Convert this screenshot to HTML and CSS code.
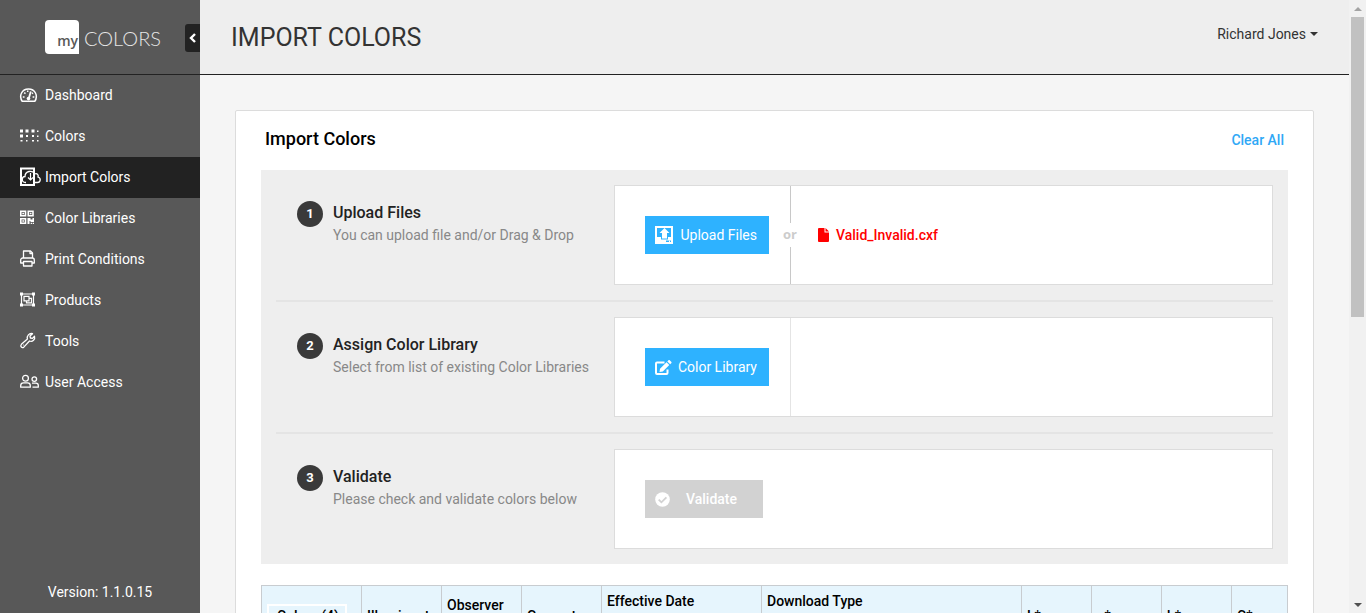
FILE: index.html
```html
<!DOCTYPE html>
<html lang="en">
<head>
<meta charset="utf-8">
<title>myColors - Import Colors</title>
<link rel="stylesheet" href="styles.css">
</head>
<body>
<aside class="sidebar">
  <div class="brand">
    <a class="logo" href="#" aria-label="myColors home"><span class="logo-my">my</span><span class="logo-word">COLORS</span></a>
    <button class="collapse" type="button" aria-label="Collapse menu">
      <svg width="7" height="10" viewBox="0 0 7 10" fill="none" stroke="#fff" stroke-width="2.400"><path d="M6 1 2 5l4 4"/></svg>
    </button>
  </div>
  <nav class="nav">
    <a class="nav-item" href="#">
      <svg class="icon" viewBox="0 0 20 20" fill="none" stroke="#fff" stroke-width="1.500"><path d="M2.200 16.300C-1.500 10.500 2 4 8.500 4s10 6.500 6.300 12.300Z" stroke-linejoin="round"/><path d="m8.600 14 2.200-7.500" stroke-width="1.800"/><circle cx="8.500" cy="13.600" r="1.800" fill="#fff" stroke="none"/><path d="M2.800 12h1.700M12.600 12h1.700M4.200 7.700l1.300 1M7.700 5.500v1.600M13 7.900l-1 .8"/></svg>
      Dashboard</a>
    <a class="nav-item" href="#">
      <svg class="icon" viewBox="0 0 20 20" fill="#fff"><path d="M0 3.500h3v3H0zM5.500 3.500h3v3h-3zM11.500 3.500h3v3h-3zM17 4.500h1.500V6H17zM0 8.500h3v3H0zM6 9h2v2H6zM12 9h2v2h-2zM17 9.500h1.500V11H17zM.5 14h2v1.500h-2zM6 14h1.500v1.500H6zM12 14h2v1.500h-2zM17 14h1.500v1.500H17z"/></svg>
      Colors</a>
    <a class="nav-item active" href="#" aria-current="page">
      <svg class="icon" viewBox="0 0 20 20" fill="none" stroke="#fff"><path d="M1 1.500h13v16.500H1z" stroke-width="2"/><path d="M6 15.500H5.500C1 15.500 1.500 9.500 5 9.500 5 4 12.500 2.500 14.500 7c3-1.200 4.200 1.200 3.500 3 3.500 1 2.500 5.500-.5 5.500H13" stroke-width="1.300"/><path d="M10.500 6v7M8 10.500l2.500 2.500 2.500-2.500" stroke-width="1.200"/></svg>
      Import Colors</a>
    <a class="nav-item" href="#">
      <svg class="icon" viewBox="0 0 20 20" fill="none" stroke="#fff" stroke-width="1.600"><path d="M.8 3.300h4.700v4.400H.8zM8.300 3.300H13v4.400H8.300zM.8 10.800h4.700v4.400H.8z"/><path d="M2.300 4.700h1.700v1.600H2.300zM9.800 4.700h1.700v1.600H9.800zM2.300 12.200h1.700v1.600H2.300zM7.500 10h3v1.500h2V10h1.500v4h-3.500v-1h-1v3h-2zM10.700 14.700h1.300v1.300h-1.300zM12.700 14.700h1.300v1.300h-1.300z" fill="#fff" stroke="none"/></svg>
      Color Libraries</a>
    <a class="nav-item" href="#">
      <svg class="icon" viewBox="0 0 20 20" fill="none" stroke="#fff" stroke-width="1.300" stroke-linejoin="round"><path d="M3.500 9V2h7l2 2v5M3.500 14H.7v-3a2 2 0 0 1 2-2h9.600a2 2 0 0 1 2 2v3h-2.800M3.500 12.500h8.500V17H3.500z"/><path d="M10 2v2.500h2.500"/></svg>
      Print Conditions</a>
    <a class="nav-item" href="#">
      <svg class="icon" viewBox="0 0 20 20" fill="none" stroke="#fff" stroke-width="1.200"><path d="M1.500 4h12v11h-12zM4 6.300h5v4.500H4zM9 8.300h2.500v4.500h-5v-2"/><path d="M0 2.500h3v3H0zM12 2.500h3v3h-3zM0 13.500h3v3H0zM12 13.500h3v3h-3z" fill="#fff" stroke="none"/></svg>
      Products</a>
    <a class="nav-item" href="#">
      <svg class="icon" viewBox="0 0 20 20" fill="none" stroke="#fff" stroke-width="1.300" stroke-linejoin="round"><path d="M12.500 2.700 10 5l.4 2 2.100.4 2-2.200c1 3.300-2 6-5 4.800L4 15.900c-2 1.800-4.300-.5-2.600-2.600l6-5.200c-1-3.300 1.900-6.300 5.100-5.400Z"/><path d="M3 14h.5"/></svg>
      Tools</a>
    <a class="nav-item" href="#">
      <svg class="icon" viewBox="0 0 20 20" fill="none" stroke="#fff" stroke-width="1.300" stroke-linejoin="round"><circle cx="5.500" cy="6.200" r="2.900"/><path d="M.7 15.200v-1.500c0-1.800 1.200-2.800 2.800-2.800h4c1.600 0 2.800 1 2.800 2.800v1.500z"/><circle cx="14.300" cy="7.100" r="2.300"/><path d="M12 11.200h4c1.400 0 2.300.9 2.300 2.300v1.700H12.500"/></svg>
      User Access</a>
  </nav>
  <p class="version">Version: 1.1.0.15</p>
</aside>

<div class="page">
  <header class="topbar">
    <h1 class="page-title">IMPORT COLORS</h1>
    <button class="user" type="button">Richard Jones <span class="caret"></span></button>
  </header>
  <main class="content">
    <section class="card">
      <div class="card-head">
        <h2 class="card-title">Import Colors</h2>
        <a class="clear" href="#">Clear All</a>
      </div>
      <ol class="steps">
        <li class="step">
          <span class="num">1</span>
          <div class="step-text"><h3>Upload Files</h3><p>You can upload file and/or Drag &amp; Drop</p></div>
          <div class="step-box">
            <div class="action">
              <button class="btn" type="button">
                <svg width="18" height="18" viewBox="0 0 18 18"><path d="M1 1h16v16H1z" fill="none" stroke="#fff" stroke-width="2"/><path d="M9.500 2 14.500 7H12v5.500H7V7H4.500z" fill="#fff"/><path d="M2 11h4v2.500h7V11h3v3.500H2z" fill="#fff"/><path d="M2 14h9v2H2zM14 14.500h1V16h-1z" fill="#fff"/></svg>
                Upload Files</button>
            </div>
            <div class="drop"><span class="or">or</span>
              <span class="file"><svg width="11" height="14" viewBox="0 0 11 14" fill="#f00"><path d="M1 0h5.500v4.500H11V13a1 1 0 0 1-1 1H1a1 1 0 0 1-1-1V1a1 1 0 0 1 1-1Z"/><path d="M7.500 0 11 3.500H7.500z"/></svg>Valid_Invalid.cxf</span>
            </div>
          </div>
        </li>
        <li class="step">
          <span class="num">2</span>
          <div class="step-text"><h3>Assign Color Library</h3><p>Select from list of existing Color Libraries</p></div>
          <div class="step-box">
            <div class="action">
              <button class="btn" type="button">
                <svg width="17" height="15" viewBox="0 0 17 15"><path d="M9.500 2.500H2A1 1 0 0 0 1 3.500V13a1 1 0 0 0 1 1h9.500a1 1 0 0 0 1-1V9.500" fill="none" stroke="#fff" stroke-width="2"/><path d="m11.500 2.200 2.800 2.800-6.500 6.500-3.300.4.500-3.200zM12.300 1.400l1-1c.5-.5 1.100-.5 1.600 0l1.300 1.300c.5.500.5 1.100 0 1.600l-1 1z" fill="#fff"/></svg>
                Color Library</button>
            </div>
            <div class="drop light"></div>
          </div>
        </li>
        <li class="step">
          <span class="num">3</span>
          <div class="step-text"><h3>Validate</h3><p>Please check and validate colors below</p></div>
          <div class="step-box">
            <div class="action">
              <button class="btn validate" type="button" disabled>
                <svg width="15" height="15" viewBox="0 0 15 15"><circle cx="7.500" cy="7.500" r="7.300" fill="#fff"/><path d="m3.700 7.600 2.700 2.700 5-5" fill="none" stroke="#d2d2d2" stroke-width="1.800"/></svg>
                <span>Validate</span></button>
            </div>
          </div>
        </li>
      </ol>
      <table class="grid">
        <colgroup><col class="w100"><col class="w80"><col class="w80"><col class="w80"><col class="w160"><col class="w260"><col class="w70"><col class="w70"><col class="w70"><col></colgroup>
        <thead>
          <tr>
            <th><span class="count">Colors (4)</span></th>
            <th>Illuminant</th>
            <th>Observer Angle</th>
            <th>Generate</th>
            <th class="top">Effective Date</th>
            <th class="top">Download Type</th>
            <th>L*</th><th>a*</th><th>b*</th><th>C*</th>
          </tr>
        </thead>
      </table>
    </section>
  </main>
</div>
<div class="scrollbar" aria-hidden="true"><span class="arrow up"></span><span class="thumb"></span><span class="arrow down"></span></div>
</body>
</html>
```
FILE: styles.css
```css
* { box-sizing: border-box; }
body {
  margin: 0;
  height: 100vh;
  display: flex;
  overflow: hidden;
  font: 14px/20px Roboto, "Liberation Sans", sans-serif;
  color: #333;
  background: #f5f5f5;
}
h1, h2, h3, p, ol { margin: 0; padding: 0; }
a { text-decoration: none; }
button { font: inherit; border: 0; }

.sidebar {
  flex: 0 0 200px;
  display: flex;
  flex-direction: column;
  background: #585858;
  color: #fff;
}
.brand {
  display: flex;
  align-items: center;
  justify-content: space-between;
  height: 75px;
  padding-left: 45px;
  border-bottom: 1px solid #222;
}
.logo { display: flex; align-items: center; gap: 5px; color: #e6e6e6; }
.logo-my {
  width: 34px;
  height: 34px;
  padding: 11px 1px 0 0;
  border-radius: 4px 4px 0 4px;
  background: #fff;
  color: #585858;
  font: 600 14px/20px "Open Sans", sans-serif;
  text-align: right;
}
.logo-word { padding-top: 2px; font: 300 20px/24px Lato, sans-serif; }
.collapse {
  display: flex;
  align-items: center;
  justify-content: center;
  width: 15px;
  height: 28px;
  margin-top: 2px;
  padding: 0;
  border-radius: 3px 0 0 3px;
  background: #222;
}
.nav-item {
  display: flex;
  align-items: center;
  gap: 5px;
  height: 41px;
  padding: 0 0 2px 20px;
  color: #fff;
}
.nav-item.active { background: #222; }
.icon { flex: none; width: 20px; height: 20px; overflow: visible; }
.version { margin-top: auto; padding-bottom: 11px; text-align: center; }

.page { flex: 1; min-width: 0; display: flex; flex-direction: column; }
.topbar {
  flex: none;
  display: flex;
  align-items: center;
  justify-content: space-between;
  height: 75px;
  padding: 2px 31px 0;
  border-bottom: 1px solid #222;
  background: #eee;
}
.page-title { font-size: 25px; line-height: 30px; font-weight: 400; }
.user {
  display: flex;
  align-items: center;
  gap: 4px;
  padding: 0 0 8px;
  background: none;
  color: #333;
}
.caret { border: 4px solid transparent; border-top-color: #333; border-bottom: 0; }

.content { flex: 1; min-height: 0; overflow: hidden; padding: 35px; }
.card { padding: 0 25px 25px; border: 1px solid #dcdcdc; border-radius: 2px; background: #fff; }
.card-head {
  display: flex;
  align-items: baseline;
  justify-content: space-between;
  height: 59px;
  padding: 16px 4px 0;
}
.card-title { font-size: 18px; line-height: 24px; font-weight: 500; color: #000; }
.clear { color: #2fa8f6; font-weight: 500; }

.steps { list-style: none; padding: 15px; background: #eee; }
.step { display: flex; align-items: flex-start; }
.step:not(:last-child) { margin-bottom: 15px; padding-bottom: 15px; border-bottom: 2px solid #e4e4e4; }
.num {
  flex: none;
  width: 26px;
  height: 26px;
  margin: 16px 10px 0 21px;
  border-radius: 50%;
  background: #3a3a3a;
  color: #fff;
  font-size: 13px;
  font-weight: 700;
  line-height: 26px;
  text-align: center;
}
.step-text { flex: 0 0 281px; padding-top: 16px; }
.step-text h3 { font-size: 16px; line-height: 24px; font-weight: 500; color: #222; }
.step-text p { color: #888; }
.step-box {
  flex: 1;
  display: flex;
  min-height: 100px;
  border: 1px solid #dcdcdc;
  background: #fff;
}
.action { flex: 0 0 175px; display: flex; align-items: center; padding-left: 30px; }
.btn {
  display: flex;
  align-items: center;
  justify-content: space-between;
  width: 124px;
  height: 38px;
  padding: 0 12px 0 10px;
  background: #2eb2ff;
  color: #fff;
  white-space: nowrap;
}
.validate { width: 118px; padding-right: 26px; background: #d2d2d2; font-weight: 500; }
.drop { position: relative; flex: 1; display: flex; align-items: center; padding-left: 27px; border-left: 1px solid #c8c8c8; }
.drop.light { border-color: #e4e4e4; }
.or {
  position: absolute;
  left: -12px;
  width: 22px;
  padding: 1px 0 3px;
  background: #fff;
  color: #ccc;
  font: 700 13px/20px "Open Sans", sans-serif;
  text-align: center;
}
.file { display: flex; align-items: center; gap: 7px; color: #f00; font-weight: 500; }

.grid { width: 100%; margin-top: 21px; table-layout: fixed; border-collapse: collapse; }
.grid th {
  height: 60px;
  padding: 0 5px;
  border: 1px solid #c8ccd0;
  background: #e6f5fd;
  color: #000;
  font-weight: 500;
  line-height: 22px;
  text-align: left;
}
.grid th.top { padding-top: 4px; vertical-align: top; }
.count { display: inline-block; padding: 0 6px 0 8px; border: 2px solid #fff; line-height: 20px; }
.w70 { width: 70px; }
.w80 { width: 80px; }
.w100 { width: 100px; }
.w160 { width: 160px; }
.w260 { width: 260px; }

.scrollbar {
  flex: 0 0 17px;
  display: flex;
  flex-direction: column;
  align-items: center;
  background: #f1f1f1;
}
.arrow { margin: 7px 0 6px; border: 4px solid transparent; }
.arrow.up { border-top: 0; border-bottom-color: #a3a3a3; }
.arrow.down { margin-top: auto; border-bottom: 0; border-top-color: #505050; }
.thumb { width: 13px; height: 49%; background: #c1c1c1; }
```
